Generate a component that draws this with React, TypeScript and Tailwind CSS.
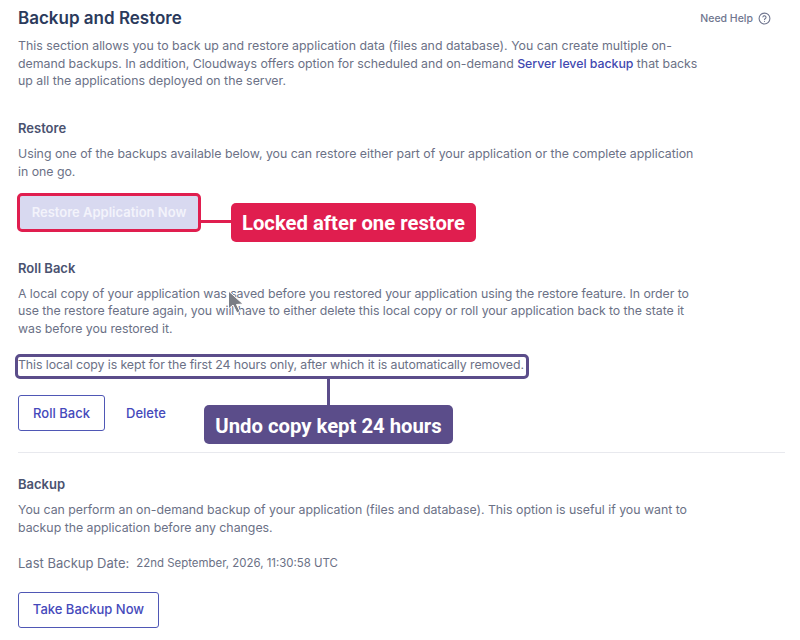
import React from "react";

const P = ({ children, className = "" }: { children: React.ReactNode; className?: string }) => (
  <p className={"text-[12.35px] leading-[17.7px] text-[#6b7186] whitespace-nowrap " + className}>{children}</p>
);
const H = ({ children, className = "" }: { children: React.ReactNode; className?: string }) => (
  <h3 className={"text-[13px] leading-[18px] font-semibold text-[#4a5270] " + className}>{children}</h3>
);
const Btn = ({ children, className = "" }: { children: React.ReactNode; className?: string }) => (
  <button className={"h-[36px] rounded-[3px] border border-[#4f57b5] bg-white text-[13px] font-medium text-[#4549bb] " + className}>{children}</button>
);

export default function App() {
  return (
    <div className="relative w-[800px] h-[640px] overflow-hidden bg-white pl-[18px] pr-[15px] pt-[9px] font-['Inter',sans-serif]">
      <div className="flex items-center justify-between">
        <h1 className="text-[17px] leading-[19px] font-semibold text-[#2b3a5c]">Backup and Restore</h1>
        <div className="flex items-center gap-[5px] pr-[14px] text-[10.5px] font-medium text-[#70768f]">
          <span>Need Help</span>
          <svg width="13" height="13" viewBox="0 0 24 24" fill="none" stroke="#70768f" strokeWidth="2" strokeLinecap="round" strokeLinejoin="round">
            <circle cx="12" cy="12" r="10" />
            <path d="M9.1 9a3 3 0 0 1 5.8 1c0 2-3 2.6-3 4" />
            <path d="M12 17.5h.01" />
          </svg>
        </div>
      </div>
      <P className="mt-[9px]">
        This section allows you to back up and restore application data (files and database). You can create multiple on-
        <br />
        <span className="tracking-[-0.03px]">
          demand backups. In addition, Cloudways offers option for scheduled and on-demand{" "}
          <a className="font-medium text-[#3f48b0]">Server level backup</a> that backs
        </span>
        <br />
        up all the applications deployed on the server.
      </P>

      <H className="mt-[29px]">Restore</H>
      <P className="mt-[8px] tracking-[-0.025px]">
        Using one of the backups available below, you can restore either part of your application or the complete application
        <br />
        in one go.
      </P>
      <button className="mt-[15px] ml-[2px] block h-[33px] w-[178px] rounded-[2px] bg-[#d8d9f0] pt-[1px] text-[13px] font-semibold text-[#f3f3fb]">
        Restore Application Now
      </button>

      <H className="mt-[30px]">Roll Back</H>
      <P className="mt-[8px] tracking-[-0.062px]">
        A local copy of your application was saved before you restored your application using the restore feature. In order to
        <br />
        use the restore feature again, you will have to either delete this local copy or roll your application back to the state it
        <br />
        was before you restored it.
      </P>
      <P className="mt-[18px] tracking-[-0.1px]">This local copy is kept for the first 24 hours only, after which it is automatically removed.</P>
      <div className="mt-[22px] flex items-center gap-[21px]">
        <Btn className="w-[87px]">Roll Back</Btn>
        <a className="text-[13px] font-medium text-[#4549bb]">Delete</a>
      </div>
      <div className="mt-[21px] h-px bg-[#e8e9ee]" />

      <H className="mt-[22px]">Backup</H>
      <P className="mt-[8px] tracking-[-0.02px]">
        You can perform an on-demand backup of your application (files and database). This option is useful if you want to
        <br />
        backup the application before any changes.
      </P>
      <div className="mt-[17px] flex items-center gap-[7px]">
        <span className="text-[13px] leading-[18px] text-[#6b7186]">Last Backup Date:</span>
        <span className="text-[11.45px] leading-[18px] text-[#6b7186]">22nd September, 2026, 11:30:58 UTC</span>
      </div>
      <Btn className="mt-[20px] block w-[141px]">Take Backup Now</Btn>

      {/* Annotation: restore */}
      <div className="absolute left-[17px] top-[193px] h-[39px] w-[184px] rounded-[5px] border-[3px] border-[#e01e4f]" />
      <div className="absolute left-[200px] top-[220px] h-[3px] w-[32px] bg-[#e01e4f]" />
      <div className="absolute left-[231px] top-[203px] flex h-[39px] w-[245px] items-center justify-center rounded-[5px] bg-[#e01e4f] pt-[2px] font-['Roboto',sans-serif] text-[20.3px] font-bold text-white">
        Locked after one restore
      </div>

      {/* Annotation: 24 hours */}
      <div className="absolute left-[15px] top-[354px] h-[25px] w-[514px] rounded-[5px] border-[3px] border-[#5b4d8a]" />
      <div className="absolute left-[327px] top-[378px] h-[28px] w-[3px] bg-[#5b4d8a]" />
      <div className="absolute left-[204px] top-[405px] flex h-[39px] w-[249px] items-center justify-center rounded-[5px] bg-[#5b4d8a] pt-[4px] font-['Roboto',sans-serif] text-[20.3px] font-bold text-white">
        Undo copy kept 24 hours
      </div>

      {/* Mouse pointer */}
      <svg className="absolute left-[226px] top-[289px]" width="20" height="27" viewBox="0 0 20 27">
        <path d="M2.5 2 L2.5 20 L7 16 L11 24 L14 22.5 L10.5 15.5 L17 15 Z" fill="#7a7d85" stroke="#ffffff" strokeWidth="1" strokeLinejoin="round" />
      </svg>
    </div>
  );
}
